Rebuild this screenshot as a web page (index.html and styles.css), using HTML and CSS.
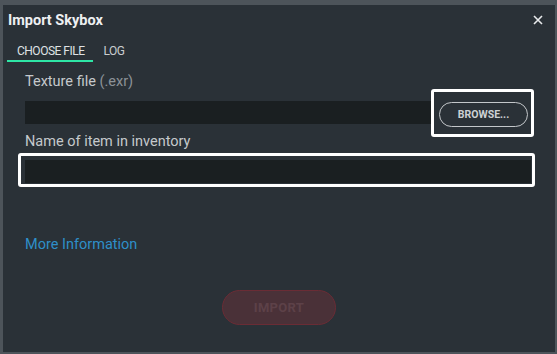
FILE: index.html
```html
<!DOCTYPE html>
<html>
<head>
<meta charset="utf-8">
<link rel="stylesheet" href="styles.css">
</head>
<body>
<div class="dialog">
  <div class="header">
    <div class="title">Import Skybox</div>
    <svg class="close" width="10" height="10" viewBox="0 0 10 10"><path d="M1 1L9 9M9 1L1 9" stroke="#e8eaec" stroke-width="1.6"/></svg>
  </div>
  <div class="tabs">
    <div class="tab active">CHOOSE FILE</div>
    <div class="tab">LOG</div>
  </div>
  <div class="content">
    <div class="label">Texture file <span class="dim">(.exr)</span></div>
    <div class="file-row">
      <div class="input file-input"></div>
      <div class="browse-wrap">
        <button class="browse">BROWSE...</button>
        <div class="hl hl-browse"></div>
      </div>
    </div>
    <div class="label label2">Name of item in inventory</div>
    <div class="name-wrap">
      <div class="input name-input"></div>
      <div class="hl hl-name"></div>
    </div>
    <a class="more">More Information</a>
  </div>
  <div class="footer">
    <button class="import">IMPORT</button>
  </div>
</div>
</body>
</html>
```
FILE: styles.css
```css
html, body {
  margin: 0;
  padding: 0;
  width: 557px;
  height: 354px;
  overflow: hidden;
  background: #4d545a;
  font-family: Roboto, "Noto Sans", sans-serif;
}
body {
  padding: 5px 2px 2px 3px;
  box-sizing: border-box;
}
.dialog {
  width: 100%;
  height: 100%;
  background: #2a3137;
  box-sizing: border-box;
  display: flex;
  flex-direction: column;
}
.header {
  display: flex;
  align-items: center;
  justify-content: space-between;
  padding: 5px 12px 0 5px;
  height: 25px;
  box-sizing: border-box;
}
.title {
  color: #eef0f2;
  font-size: 14.5px;
  font-weight: 700;
}
.close {
  display: block;
  margin-top: 0;
}
.tabs {
  display: flex;
  padding: 14px 0 0 4px;
}
.tab {
  font-size: 12px;
  color: #c9cdd0;
  padding: 0 9px 2px 10px;
  border-bottom: 2px solid transparent;
  letter-spacing: -0.5px;
}
.tab.active {
  border-bottom-color: #2ee6a6;
  color: #dfe2e4;
}
.content {
  padding: 12px 21px 0 22px;
  flex: 1;
}
.label {
  font-size: 14.5px;
  color: #c5c9cc;
  height: 16px;
  line-height: 16px;
}
.dim { color: #8c9297; }
.file-row {
  display: flex;
  align-items: flex-start;
  margin-top: 11px;
}
.input {
  background: #1a1f21;
  height: 23px;
}
.file-input {
  flex: 1;
}
.browse-wrap {
  position: relative;
  width: 103px;
  height: 23px;
  display: flex;
  justify-content: center;
}
.browse {
  flex: none;
  width: 89px;
  height: 25px;
  margin-top: 1px;
  border: 1.5px solid #c3c7ca;
  border-radius: 13px;
  background: transparent;
  color: #cdd1d4;
  font-family: Roboto, sans-serif;
  font-size: 10.5px;
  font-weight: 700;
  letter-spacing: 0;
  padding: 0;
  margin-left: 2px;
}
.hl {
  position: absolute;
  border: 3.5px solid #ffffff;
  border-radius: 3px;
  box-sizing: border-box;
}
.hl-browse {
  left: 0;
  top: -12px;
  width: 103px;
  height: 48px;
}
.label2 {
  margin-top: 10px;
}
.name-wrap {
  position: relative;
  margin-top: 10px;
  margin-right: 3px;
}
.hl-name {
  left: -7px;
  right: -4px;
  top: -7px;
  bottom: -4px;
}
.more {
  display: block;
  margin-top: 53px;
  font-size: 14.5px;
  color: #2e8fc9;
}
.footer {
  display: flex;
  justify-content: center;
  padding: 0 0 27px 0;
}
.import {
  width: 114px;
  height: 35px;
  border-radius: 18px;
  border: 1.5px solid #6a2c35;
  background: #4a3138;
  color: #5d4148;
  font-family: Roboto, sans-serif;
  font-weight: 700;
  font-size: 13px;
  letter-spacing: 0.3px;
}
```
